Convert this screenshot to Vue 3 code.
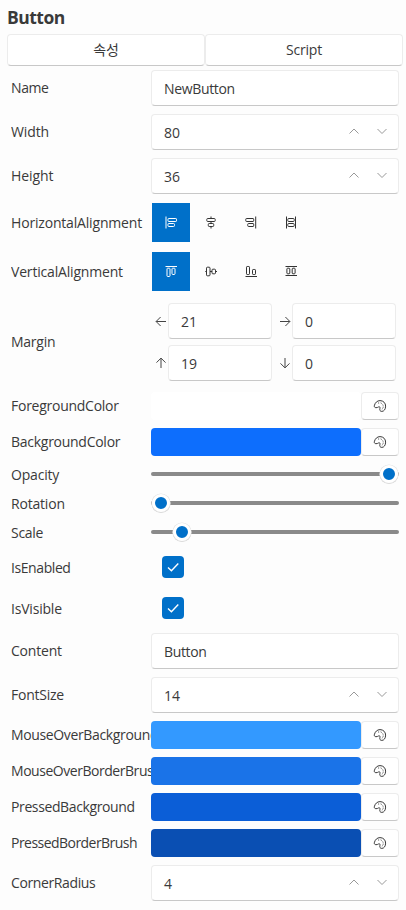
<script setup>
import { ref } from 'vue'

// track: letter spacing of the label, in px
const rows = ref([
  { label: 'Name', type: 'text', value: 'NewButton', h: 44, track: -0.4 },
  { label: 'Width', type: 'number', value: '80', h: 44, track: -0.1 },
  { label: 'Height', type: 'number', value: '36', h: 44, track: -0.1 },
  { label: 'HorizontalAlignment', type: 'halign', h: 49, track: -0.18 },
  { label: 'VerticalAlignment', type: 'valign', h: 49, track: -0.18 },
  { label: 'Margin', type: 'margin', h: 92, track: -0.25 },
  { label: 'ForegroundColor', type: 'color', value: '#ffffff', h: 36, track: -0.26 },
  { label: 'BackgroundColor', type: 'color', value: '#0d6efd', h: 36, track: -0.27 },
  { label: 'Opacity', type: 'slider', value: 238, h: 29, track: -0.2 },
  { label: 'Rotation', type: 'slider', value: 10, h: 29, track: -0.2 },
  { label: 'Scale', type: 'slider', value: 31, h: 29, track: -0.3 },
  { label: 'IsEnabled', type: 'check', h: 41, track: -0.42 },
  { label: 'IsVisible', type: 'check', h: 41, track: -0.2 },
  { label: 'Content', type: 'text', value: 'Button', h: 44, track: -0.2 },
  { label: 'FontSize', type: 'number', value: '14', h: 44, track: -0.25 },
  { label: 'MouseOverBackground', type: 'color', value: '#3399ff', h: 36, track: -0.36 },
  { label: 'MouseOverBorderBrush', type: 'color', value: '#1a73e8', h: 36, track: -0.46 },
  { label: 'PressedBackground', type: 'color', value: '#0b5ed7', h: 36, track: -0.38 },
  { label: 'PressedBorderBrush', type: 'color', value: '#0a4fb3', h: 36, track: -0.54 },
  { label: 'CornerRadius', type: 'number', value: '4', h: 44, track: -0.38 },
])

const margins = [
  { side: 'left', value: '21', d: 'M11 6.500H1.200M5.600 2L1.100 6.500l4.500 4.500' },
  { side: 'right', value: '0', d: 'M1 6.500h9.800M6.400 2L10.900 6.500l-4.500 4.500' },
  { side: 'top', value: '19', d: 'M6 11V1.200M1.500 5.600L6 1.100l4.500 4.500' },
  { side: 'bottom', value: '0', d: 'M6 1v9.800M1.500 6.400L6 10.900l4.500-4.500' },
]

const aligns = {
  halign: [
    'M1 .5v12M3.700 2.500h7.100a.7.7 0 0 1 .7.700v1.600a.7.7 0 0 1-.7.700H3.700a.7.7 0 0 1-.7-.700V3.200a.7.7 0 0 1 .7-.700zM3.700 7.500h4.800a1 1 0 0 1 1 1v1a1 1 0 0 1-1 1H3.700a.7.7 0 0 1-.7-.7V8.200a.7.7 0 0 1 .7-.7z',
    'M6 .5v2M6 5.500v2M6 10.500v2M2.700 2.500h6.600a.9.9 0 0 1 .9.900v1.200a.9.9 0 0 1-.9.900H2.700a.9.9 0 0 1-.9-.900V3.400a.9.9 0 0 1 .9-.900zM4.200 7.500h3.600a.9.9 0 0 1 .9.900v1.200a.9.9 0 0 1-.9.900H4.200a.9.9 0 0 1-.9-.9V8.400a.9.9 0 0 1 .9-.9z',
    'M10.700 .5v12M1.500 2.500h6.500a.7.7 0 0 1 .7.700v1.600a.7.7 0 0 1-.7.700H1.500a.7.7 0 0 1-.7-.700V3.200a.7.7 0 0 1 .7-.700zM3.700 7.500H8a.7.7 0 0 1 .7.700v1.600a.7.7 0 0 1-.7.700H3.700a1 1 0 0 1-1-1v-1a1 1 0 0 1 1-1z',
    'M1.500 .5v12M10.500 .5v12M3.600 2.500h4.800a.8.8 0 0 1 .8.800v1.400a.8.8 0 0 1-.8.800H3.600a.8.8 0 0 1-.8-.8V3.300a.8.8 0 0 1 .8-.8zM3.600 7.500h4.800a.8.8 0 0 1 .8.800v1.400a.8.8 0 0 1-.8.800H3.600a.8.8 0 0 1-.8-.8V8.300a.8.8 0 0 1 .8-.8z',
  ],
  valign: [
    'M.5 1.500h11.500M2.700 3.200h1.600a.7.7 0 0 1 .7.700v6.900a.7.7 0 0 1-.7.700H2.700a.7.7 0 0 1-.7-.7V3.900a.7.7 0 0 1 .7-.7zM7.700 3.200h1.600a.7.7 0 0 1 .7.700v4.600a1 1 0 0 1-1 1H8a1 1 0 0 1-1-1V3.900a.7.7 0 0 1 .7-.7z',
    'M.3 6.500h1.200M5 6.500h2M10.500 6.500h1.500M2.400 2.200h1.700a.9.9 0 0 1 .9.900v6.800a.9.9 0 0 1-.9.900H2.400a.9.9 0 0 1-.9-.9V3.100a.9.9 0 0 1 .9-.9zM7.900 4.200h1.700a.9.9 0 0 1 .9.900v2.800a.9.9 0 0 1-.9.900H7.900a.9.9 0 0 1-.9-.9V5.100a.9.9 0 0 1 .9-.9z',
    'M.5 11.500h11.500M2.200 1.500h1.600a.7.7 0 0 1 .7.700v6.600a.7.7 0 0 1-.7.700H2.200a.7.7 0 0 1-.7-.7V2.200a.7.7 0 0 1 .7-.7zM8.200 4.500h1.600a.7.7 0 0 1 .7.700v3.600a.7.7 0 0 1-.7.700H8.200a.7.7 0 0 1-.7-.7V5.200a.7.7 0 0 1 .7-.7z',
    'M.5 1.500h11.500M.5 10.500h11.500M2.700 3.200h1.300a.8.8 0 0 1 .8.800v4a.8.8 0 0 1-.8.800H2.700a.8.8 0 0 1-.8-.8V4a.8.8 0 0 1 .8-.8zM8 3.200h1.300a.8.8 0 0 1 .8.800v4a.8.8 0 0 1-.8.800H8a.8.8 0 0 1-.8-.8V4A.8.8 0 0 1 8 3.200z',
  ],
}
</script>

<template>
  <main class="panel">
    <h1 class="title">Button</h1>
    <nav class="tabs">
      <button class="box tab">속성</button>
      <button class="box tab">Script</button>
    </nav>
    <section
      v-for="row in rows"
      :key="row.label"
      class="row"
      :style="{ height: row.h + 'px' }"
    >
      <span class="label" :style="{ letterSpacing: row.track + 'px' }">{{ row.label }}</span>

      <div v-if="row.type === 'text'" class="box field text">{{ row.value }}</div>

      <div v-else-if="row.type === 'number'" class="box field">
        <span class="num">{{ row.value }}</span>
        <svg class="chev" viewBox="0 0 12 12"><path d="M1.500 8.500L6 4l4.500 4.500" /></svg>
        <svg class="chev" viewBox="0 0 12 12"><path d="M1.500 4L6 8.500L10.500 4" /></svg>
      </div>

      <div v-else-if="aligns[row.type]" class="aligns">
        <button v-for="(d, i) in aligns[row.type]" :key="i" class="align" :class="{ on: i === 0 }">
          <svg viewBox="0 0 13 13"><path :d="d" /></svg>
        </button>
      </div>

      <div v-else-if="row.type === 'margin'" class="margins">
        <div v-for="m in margins" :key="m.side" class="margin">
          <svg class="arrow" viewBox="0 0 12 12"><path :d="m.d" /></svg>
          <div class="box field">{{ m.value }}</div>
        </div>
      </div>

      <div v-else-if="row.type === 'color'" class="color">
        <div class="swatch" :style="{ background: row.value }"></div>
        <button class="box pick">
          <svg viewBox="0 0 14 14">
            <path d="M1.300 6.800C2 3.700 4.200 1.600 7 1.600c3.400 0 5.600 2.500 5.600 5.500 0 3.200-1.600 5.300-3.800 5.300-1.700 0-2.300-1.200-1.900-2.700.4-1.500-.2-2.300-1.300-1.800-.9.400-1.500.9-2.600.8-1.200-.1-1.900-.8-1.700-1.900z" />
            <path class="dots" d="M5.200 4h.9M7.700 3.900l.9.500M9.700 5.600l.4.900M10.200 7.700l-.1.900M9.500 9.700l-.6.500" />
          </svg>
        </button>
      </div>

      <div v-else-if="row.type === 'slider'" class="slider">
        <i class="thumb" :style="{ left: row.value + 'px' }"></i>
      </div>

      <div v-else class="check">
        <svg viewBox="0 0 22 22"><path d="M6 11.500l3.400 3.300L16.300 7.500" /></svg>
      </div>
    </section>
  </main>
</template>

<style>
body {
  background: #fdfdfd;
}
</style>

<style scoped>
.panel {
  box-sizing: border-box;
  width: 406px;
  height: 910px;
  overflow: hidden;
  font-family: 'Open Sans', 'Noto Sans CJK KR', sans-serif;
  font-size: 14px;
  color: #3a3a3a;
}
.title {
  box-sizing: border-box;
  height: 34px;
  margin: 0;
  padding: 5px 7px 0;
  font-size: 17.500px;
  line-height: 25px;
  font-weight: 700;
  letter-spacing: -0.500px;
}
.tabs {
  display: flex;
  padding-left: 7px;
}
.box {
  box-sizing: border-box;
  background: #fff;
  border: 1px solid #ececec;
  border-bottom-color: #c8c8c8;
  border-radius: 4px;
  color: inherit;
  font: inherit;
}
.tab {
  width: 198px;
  height: 32px;
  padding: 0;
  line-height: 20px;
  letter-spacing: -0.200px;
}
.row {
  display: grid;
  grid-template-columns: 140px 248px;
  align-items: center;
  padding-left: 11px;
}
.label {
  overflow: hidden;
  white-space: nowrap;
  line-height: 20px;
}
.field {
  display: flex;
  align-items: center;
  height: 36px;
  padding: 1px 10px 0 12px;
  line-height: 19px;
}
.text {
  letter-spacing: -0.350px;
}
.num {
  flex: 1;
}
svg {
  display: block;
  fill: none;
  stroke: currentColor;
  stroke-width: 1;
}
.chev {
  width: 12px;
  height: 12px;
  margin: -3px 0 0 16px;
  color: #999;
}
.aligns {
  display: flex;
  gap: 2px;
  padding-left: 1px;
}
.align {
  display: grid;
  place-content: center;
  width: 38px;
  height: 39px;
  padding: 0;
  border: 0;
  background: none;
  color: #333;
}
.align.on {
  background: #0070c9;
  color: #fff;
}
.align svg {
  width: 13px;
  height: 13px;
}
.margins {
  display: grid;
  grid-template-columns: 124px 124px;
  row-gap: 6px;
}
.margin {
  display: flex;
  align-items: center;
  padding-left: 4px;
}
.margin .field {
  width: 104px;
}
.arrow {
  width: 12px;
  height: 12px;
  margin-right: 1px;
  color: #444;
}
.color {
  display: flex;
}
.swatch {
  width: 210px;
  height: 28px;
  border-radius: 4px;
}
.pick {
  display: grid;
  place-content: center;
  width: 38px;
  height: 28px;
  padding: 0;
}
.pick svg {
  width: 14px;
  height: 14px;
}
.slider {
  position: relative;
  height: 4px;
  margin-bottom: 1px;
  border-radius: 2px;
  background: #8a8a8a;
}
.thumb {
  position: absolute;
  top: -7px;
  box-sizing: border-box;
  width: 18px;
  height: 18px;
  margin-left: -9px;
  border: 3px solid #fff;
  border-radius: 50%;
  background: #0070c9;
  box-shadow: 0 0 0 0.500px #e4e4e4, 0 0.500px 0 0.500px #d4d4d4;
}
.check {
  width: 22px;
  height: 22px;
  margin: 0 0 1px 11px;
  border-radius: 4px;
  background: #0070c9;
  color: #fff;
}
.check path {
  stroke-width: 1.400;
}
</style>
